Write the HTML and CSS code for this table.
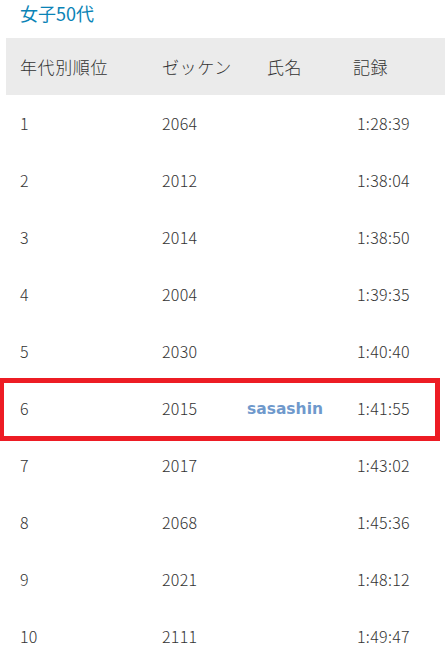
FILE: index.html
```html
<!DOCTYPE html>
<html lang="ja">
<head>
<meta charset="utf-8">
<link rel="stylesheet" href="styles.css">
</head>
<body>
<div class="page">
  <h2 class="title">女子50代</h2>
  <div class="table-wrap">
    <table class="results">
      <thead>
        <tr><th class="c1">年代別順位</th><th class="c2">ゼッケン</th><th class="c3">氏名</th><th class="c4">記録</th></tr>
      </thead>
      <tbody>
        <tr><td>1</td><td>2064</td><td></td><td class="time">1:28:39</td></tr>
        <tr><td>2</td><td>2012</td><td></td><td class="time">1:38:04</td></tr>
        <tr><td>3</td><td>2014</td><td></td><td class="time">1:38:50</td></tr>
        <tr><td>4</td><td>2004</td><td></td><td class="time">1:39:35</td></tr>
        <tr><td>5</td><td>2030</td><td></td><td class="time">1:40:40</td></tr>
        <tr><td>6</td><td>2015</td><td><span class="name">sasashin</span></td><td class="time">1:41:55</td></tr>
        <tr><td>7</td><td>2017</td><td></td><td class="time">1:43:02</td></tr>
        <tr><td>8</td><td>2068</td><td></td><td class="time">1:45:36</td></tr>
        <tr><td>9</td><td>2021</td><td></td><td class="time">1:48:12</td></tr>
        <tr><td>10</td><td>2111</td><td></td><td class="time">1:49:47</td></tr>
      </tbody>
    </table>
    <div class="highlight"></div>
  </div>
</div>
</body>
</html>
```

FILE: styles.css
```css
html, body {
  margin: 0;
  padding: 0;
  background: #ffffff;
}
.page {
  width: 445px;
  font-family: "Noto Sans CJK JP", "Liberation Sans", sans-serif;
  color: #333333;
}
.title {
  margin: 0 0 12px;
  padding: 0 0 0 20px;
  height: 26px;
  line-height: 26px;
  font-size: 18px;
  font-weight: 400;
  color: #0a83b6;
  letter-spacing: 0;
}
.table-wrap {
  position: relative;
  margin-left: 6px;
}
.results {
  width: 439px;
  border-collapse: collapse;
  table-layout: fixed;
}
.results th,
.results td {
  height: 57px;
  padding: 0 0 1px 14px;
  text-align: left;
  vertical-align: middle;
  font-size: 16px;
  font-weight: 300;
  letter-spacing: 0.3px;
  box-sizing: border-box;
}
.results thead tr {
  background: #ebebeb;
}
.results th {
  font-weight: 300;
  font-size: 17px;
  letter-spacing: 0.6px;
}
.c1 { width: 142px; }
.c2 { width: 105px; }
.c3 { width: 86px; }
.c4 { width: auto; }
.results td.time {
  padding-left: 18px;
}
.name {
  display: inline-block;
  margin-left: -20px;
  font-family: "DejaVu Sans", sans-serif;
  font-weight: bold;
  font-size: 15.5px;
  letter-spacing: 0;
  color: #6f99cc;
  position: relative;
  top: -1px;
}
.highlight {
  position: absolute;
  left: -6px;
  top: 340px;
  width: 440px;
  height: 63px;
  border: 5px solid #ed1c24;
  border-left-width: 4px;
  box-sizing: border-box;
}
```
